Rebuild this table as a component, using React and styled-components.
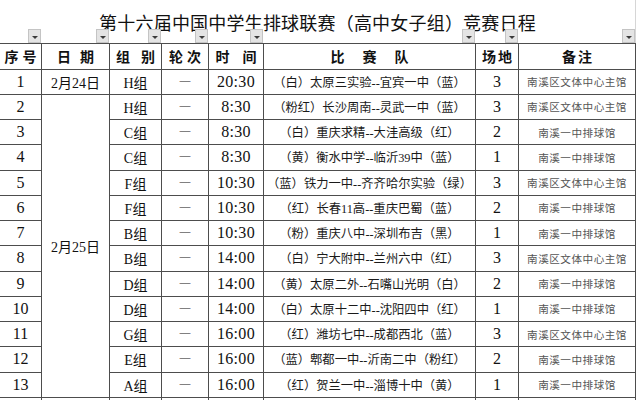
import React from "react";
import styled, { createGlobalStyle, css } from "styled-components";

const GlobalStyle = createGlobalStyle`
  html, body {
    margin: 0;
    padding: 0;
    background: #ffffff;
    overflow: hidden;
  }
  body {
    font-family: "Liberation Serif", "Noto Sans CJK SC", serif;
    color: #111;
  }
`;

const LINE = "#4d4d4d";

const Sheet = styled.div`
  display: grid;
  grid-template-columns: 42px 68px 52px 47px 55px 212px 43px 117px;
  grid-template-rows: 43px 26.5px repeat(14, 25.25px);
  width: 636px;
`;

const Title = styled.div`
  grid-column: 1 / -1;
  display: flex;
  align-items: center;
  justify-content: center;
  padding-top: 1px;
  font-family: "Noto Sans CJK SC", sans-serif;
  font-size: 18px;
  letter-spacing: 0.2px;
  color: #111;
  border-right: 1px solid #d6d6d6;
  box-sizing: border-box;
`;

const HeadCell = styled.div`
  position: relative;
  display: flex;
  align-items: center;
  justify-content: center;
  gap: ${(p) => p.$gap}px;
  box-sizing: border-box;
  border-top: 1px solid ${LINE};
  border-bottom: 1px solid ${LINE};
  border-right: 1px solid ${LINE};
  font-family: "Noto Sans CJK SC", sans-serif;
  font-weight: 700;
  font-size: 14px;
  color: #111;
`;

const FilterButton = styled.span`
  position: absolute;
  right: 0;
  top: -15px;
  width: 13px;
  height: 14px;
  box-sizing: border-box;
  background: #e4e4e4;
  border: 1px solid #c4c4c4;
  display: flex;
  align-items: center;
  justify-content: center;
  &::after {
    content: "";
    margin-top: 2px;
    border-left: 3px solid transparent;
    border-right: 3px solid transparent;
    border-top: 3px solid #3a3a3a;
  }
`;

const variants = {
  num: css`
    font-family: "Liberation Serif", serif;
    font-size: 16px;
  `,
  date: css`
    font-family: "Liberation Serif", "Noto Sans CJK SC", serif;
    font-size: 14px;
  `,
  group: css`
    font-family: "Liberation Serif", "Noto Sans CJK SC", serif;
    font-size: 14px;
  `,
  round: css`
    font-family: "Noto Sans CJK SC", sans-serif;
    font-size: 12px;
    font-weight: 300;
    padding-bottom: 1px;
  `,
  time: css`
    font-family: "Liberation Serif", serif;
    font-size: 16px;
    letter-spacing: 0.3px;
  `,
  team: css`
    font-family: "Liberation Serif", "Noto Sans CJK SC", serif;
    font-size: 12.3px;
    color: #1a1a1a;
  `,
  note: css`
    font-family: "Noto Sans CJK SC", sans-serif;
    font-size: 10.6px;
    letter-spacing: 0.5px;
    color: #555;
  `,
};

const Cell = styled.div`
  display: flex;
  align-items: center;
  justify-content: center;
  box-sizing: border-box;
  border-right: 1px solid ${LINE};
  border-bottom: 1px solid ${LINE};
  white-space: nowrap;
  overflow: hidden;
  ${(p) => (p.$span ? `grid-row: span ${p.$span};` : "")}
  ${(p) => variants[p.$kind] || ""}
`;

const headers = [
  { label: "序号", gap: 4 },
  { label: "日期", gap: 9 },
  { label: "组别", gap: 11 },
  { label: "轮次", gap: 4 },
  { label: "时间", gap: 13 },
  { label: "比赛队", gap: 18 },
  { label: "场地", gap: 2 },
  { label: "备注", gap: 2 },
];

const V1 = "南溪区文体中心主馆";
const V2 = "南溪一中排球馆";

const rows = [
  ["1", "H组", "20:30", "（白）太原三实验--宜宾一中（蓝）", "3", V1],
  ["2", "H组", "8:30", "（粉红）长沙周南--灵武一中（蓝）", "3", V1],
  ["3", "C组", "8:30", "（白）重庆求精--大洼高级（红）", "2", V2],
  ["4", "C组", "8:30", "（黄）衡水中学--临沂39中（蓝）", "1", V2],
  ["5", "F组", "10:30", "（蓝）铁力一中--齐齐哈尔实验（绿）", "3", V1],
  ["6", "F组", "10:30", "（红）长春11高--重庆巴蜀（蓝）", "2", V2],
  ["7", "B组", "10:30", "（粉）重庆八中--深圳布吉（黑）", "1", V2],
  ["8", "B组", "14:00", "（白）宁大附中--兰州六中（红）", "3", V1],
  ["9", "D组", "14:00", "（黄）太原二外--石嘴山光明（白）", "2", V2],
  ["10", "D组", "14:00", "（白）太原十二中--沈阳四中（红）", "1", V2],
  ["11", "G组", "16:00", "（红）潍坊七中--成都西北（蓝）", "3", V1],
  ["12", "E组", "16:00", "（蓝）郫都一中--沂南二中（粉红）", "2", V2],
  ["13", "A组", "16:00", "（红）贺兰一中--淄博十中（黄）", "1", V2],
];

function dateCell(i) {
  if (i === 0) return <Cell $kind="date">2月24日</Cell>;
  if (i === 1)
    return (
      <Cell $kind="date" $span={12}>
        2月25日
      </Cell>
    );
  return null;
}

export default function App() {
  return (
    <>
      <GlobalStyle />
      <Sheet>
        <Title>第十六届中国中学生排球联赛（高中女子组）竞赛日程</Title>
        {headers.map((h) => (
          <HeadCell key={h.label} $gap={h.gap}>
            {h.label.split("").map((c, k) => (
              <span key={k}>{c}</span>
            ))}
            <FilterButton />
          </HeadCell>
        ))}
        {rows.map((r, i) => (
          <React.Fragment key={r[0]}>
            <Cell $kind="num">{r[0]}</Cell>
            {dateCell(i)}
            <Cell $kind="group">{r[1]}</Cell>
            <Cell $kind="round">一</Cell>
            <Cell $kind="time">{r[2]}</Cell>
            <Cell $kind="team">{r[3]}</Cell>
            <Cell $kind="num">{r[4]}</Cell>
            <Cell $kind="note">{r[5]}</Cell>
          </React.Fragment>
        ))}
        {Array.from({ length: 8 }).map((_, k) => (
          <Cell key={`e${k}`} />
        ))}
      </Sheet>
    </>
  );
}
